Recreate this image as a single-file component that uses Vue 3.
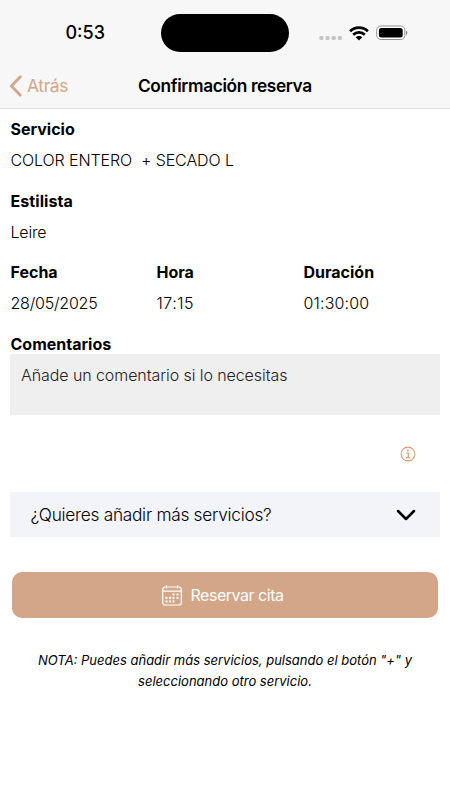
<script setup>
const details = [
  { label: 'Fecha', value: '28/05/2025', kind: 'date' },
  { label: 'Hora', value: '17:15', kind: 'hour' },
  { label: 'Duración', value: '01:30:00', kind: 'duration' },
]
const calendarDots = [
  [11.5, 9.5], [15.5, 9.5],
  [4.5, 13], [8, 13], [11.5, 13], [15.5, 13],
  [4.5, 16.5], [8, 16.5], [11.5, 16.5],
]
</script>

<template>
  <div class="screen">
    <header class="header">
      <div class="status">
        <span class="time">0:53</span>
        <div class="island"></div>
        <div class="indicators">
          <svg class="signal" width="24" height="4" viewBox="0 0 24 4" fill="#c5c5c7">
            <rect v-for="n in 4" :key="n" :x="(n - 1) * 6.15 + 0.4" y="0" width="4" height="4" rx="1.2" />
          </svg>
          <svg class="wifi" width="20" height="15" viewBox="0 0 20 15" fill="none" stroke="#000" stroke-width="2.7">
            <path d="M1.1 5.3C6.1.5 13.9.5 18.9 5.3" />
            <path d="M4.2 8.7C7.4 5.7 12.6 5.7 15.8 8.7" />
            <path d="M6.7 11.3C8.5 9.5 11.5 9.5 13.3 11.3L10 14.5Z" fill="#000" stroke="none" />
          </svg>
          <svg class="battery" width="32" height="16" viewBox="0 0 32 16">
            <rect x=".7" y="1" width="28.2" height="13.5" rx="4.2" fill="#fff" stroke="#929292" />
            <rect x="2.9" y="3.1" width="23.8" height="9.3" rx="2.5" fill="#000" />
            <path d="M30 5.5C31.8 6.3 31.8 9.2 30 10Z" fill="#858585" />
          </svg>
        </div>
      </div>
      <nav class="nav">
        <a class="back">
          <svg width="14" height="22" viewBox="0 0 14 22" fill="none" stroke="#d3a688" stroke-width="2.8" stroke-linecap="round" stroke-linejoin="miter">
            <path d="M11.3 1.8L2.4 11L11.3 20.2" />
          </svg>
          <span>Atrás</span>
        </a>
        <h1>Confirmación reserva</h1>
      </nav>
    </header>

    <main class="content">
      <section class="field">
        <h2>Servicio</h2>
        <p class="service">COLOR ENTERO&nbsp; + SECADO L</p>
      </section>
      <section class="field">
        <h2 class="stylist-label">Estilista</h2>
        <p class="stylist">Leire</p>
      </section>
      <div class="details">
        <section v-for="item in details" :key="item.label" class="field">
          <h2>{{ item.label }}</h2>
          <p :class="item.kind">{{ item.value }}</p>
        </section>
      </div>
      <h2 class="comments-label">Comentarios</h2>
      <div class="comment">Añade un comentario si lo necesitas</div>

      <div class="info">
        <svg width="16" height="16" viewBox="0 0 16 16" fill="none" stroke="#d99a70">
          <circle cx="8" cy="8" r="6.9" stroke-width="1.1" />
          <circle cx="7.9" cy="4.6" r="1" fill="#d99a70" stroke="none" />
          <path d="M6.3 7H8.3V11.5M6 11.6H10.2" stroke-width="1.2" />
        </svg>
      </div>

      <div class="accordion">
        <span>¿Quieres añadir más servicios?</span>
        <svg width="20" height="12" viewBox="0 0 20 12" fill="none" stroke="#000" stroke-width="2.5" stroke-linecap="round" stroke-linejoin="round">
          <path d="M2 2L10 10L18 2" />
        </svg>
      </div>

      <button class="reserve">
        <svg width="20" height="21" viewBox="0 0 20 21" fill="none" stroke="#fff" stroke-width="1.2">
          <rect x=".7" y="2" width="18.6" height="18" rx="2.5" />
          <path d="M.7 6.1H19.3M4.5 .3V3.2M15.5 .3V3.2" />
          <circle v-for="([x, y], i) in calendarDots" :key="i" :cx="x" :cy="y" r="1.15" fill="#fff" stroke="none" />
        </svg>
        <span>Reservar cita</span>
      </button>

      <p class="note">NOTA: Puedes añadir más servicios, pulsando el botón "+" y<br><span>seleccionando otro servicio.</span></p>
    </main>
  </div>
</template>

<style>
body {
  margin: 0;
  background: #fff;
}
</style>

<style scoped>
.screen {
  width: 450px;
  height: 800px;
  overflow: hidden;
  background: #fff;
  color: #000;
  font-family: Inter, "Liberation Sans", sans-serif;
}
.header {
  box-sizing: border-box;
  height: 109px;
  background: #f7f7f7;
  border-bottom: 1px solid #dedede;
}
.status {
  display: grid;
  grid-template-columns: 161px 128px 161px;
  align-items: center;
  height: 66px;
}
.time {
  padding-left: 65.5px;
  font-size: 18px;
  font-weight: 500;
  line-height: 24px;
}
.island {
  height: 38px;
  border-radius: 19px;
  background: #000;
}
.indicators {
  display: flex;
  align-items: center;
  padding-left: 30px;
}
.signal {
  margin-top: 9px;
}
.wifi {
  margin: 0 7px 0 6px;
}
.nav {
  display: grid;
  grid-template-columns: 138px 1fr;
  align-items: center;
  height: 40px;
}
.back {
  display: flex;
  align-items: center;
  gap: 4px;
  padding-left: 9px;
  color: #d3a688;
  font-size: 17.5px;
  letter-spacing: -.4px;
  line-height: 24px;
}
h1, h2, p {
  margin: 0;
}
h1 {
  font-size: 17.3px;
  font-weight: 600;
  letter-spacing: -.37px;
  line-height: 24px;
  white-space: nowrap;
}
.content {
  padding: 10px 10px 0;
}
h2 {
  font-size: 16px;
  font-weight: 700;
  line-height: 21px;
}
.field {
  height: 71.5px;
  padding-left: .5px;
  white-space: nowrap;
}
.field p {
  margin-top: 10px;
  font-size: 16px;
  line-height: 20px;
  font-weight: 300;
}
.service {
  letter-spacing: -.1px;
}
.stylist-label {
  letter-spacing: .08px;
}
.stylist {
  letter-spacing: -.2px;
}
.date {
  letter-spacing: -.22px;
}
.hour {
  letter-spacing: .5px;
}
.duration {
  letter-spacing: .15px;
}
.details {
  display: grid;
  grid-template-columns: 146px 147px 1fr;
}
.comments-label {
  padding-left: .5px;
}
.comment {
  box-sizing: border-box;
  height: 61px;
  margin-top: -.5px;
  padding: 11px;
  background: #efefef;
  color: #222;
  font-size: 16px;
  font-weight: 300;
  letter-spacing: -.08px;
  line-height: 20px;
}
.info {
  display: flex;
  justify-content: flex-end;
  align-items: center;
  height: 77px;
  padding-right: 24px;
}
.accordion {
  display: flex;
  align-items: center;
  justify-content: space-between;
  height: 45px;
  padding: 0 24px 0 20.5px;
  background: #f3f4f9;
  font-size: 17.3px;
  font-weight: 300;
  letter-spacing: -.28px;
}
.reserve {
  display: flex;
  align-items: center;
  justify-content: center;
  gap: 8px;
  width: 426px;
  height: 46px;
  margin: 35px auto 0;
  padding: 0 4px 0 0;
  border: 0;
  border-radius: 10px;
  background: #d3a688;
  color: #fff;
  font-family: inherit;
  font-size: 16px;
  letter-spacing: -.47px;
}
.note {
  margin-top: 32px;
  text-align: center;
  font-size: 13px;
  font-style: italic;
  line-height: 20.5px;
  white-space: nowrap;
}
</style>
